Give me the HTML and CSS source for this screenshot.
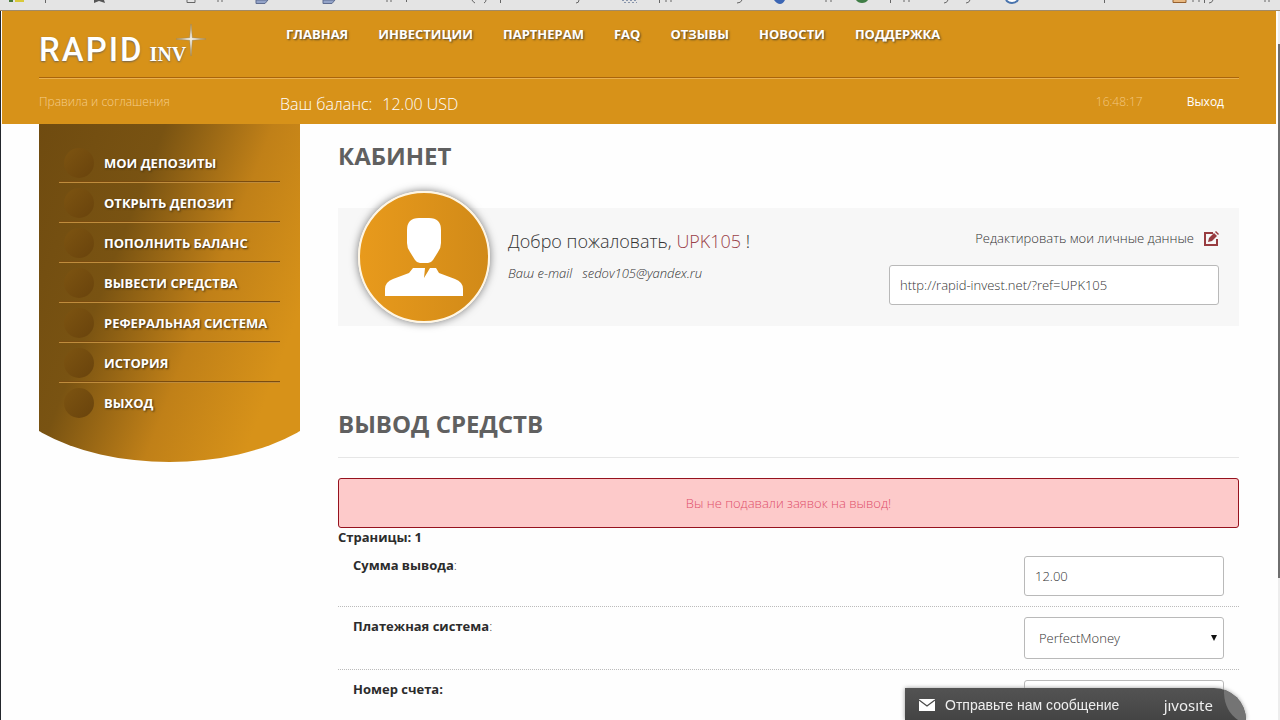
FILE: index.html
```html
<!DOCTYPE html>
<html lang="ru">
<head>
<meta charset="utf-8">
<title>Rapid Inv — Кабинет</title>
<link rel="stylesheet" href="styles.css">
</head>
<body>
<div class="bookmarks" aria-hidden="true">
  <svg class="bookmarks-art" width="1280" height="9" viewBox="0 0 1280 9">
    <path fill="#4a7a3a" d="M9 0h4v2H9z"/><path fill="#d9c93a" d="M15 0h9v2h-9z"/>
    <path fill="#555" d="M94 0h10l1 3-6-2-5 2z"/>
    <path fill="none" stroke="#666" d="M187 0v2.500h8V0"/>
    <path fill="#93a3c8" stroke="#5f6d90" d="M256 0v3.500h9l3-3.500zM323 0v3.500h9l3-3.500z"/>
    <path fill="none" stroke="#666" d="M45.500 0v3M218 0v2M222 0v2M387 0v2M391 0v2M406.500 0v2M472 0q1 2 3 3M486 0q0 2-2 3M500.500 0v3M576 3q3 0 3-3M659.500 0v3M666 0v2M671 0v2M737 3q4 0 5-3M826 0v2M831 0v2M890.500 0v3M904 0v2M909 0v2M944 3q3 0 4-3M966 3q3 0 4-3M1104.500 0v3M1193 0v2M1199 0v2M1204.500 0v3M1209 3q3 0 4-3M1265 0v2M1269 0v2"/>
    <path fill="none" stroke="#8794ac" stroke-dasharray="2 2" d="M622 .5h16M624 2.500h13"/>
    <path fill="#3c66b4" d="M774 0h11q-2 4-5 4t-6-4z"/>
    <path fill="#3f7d45" d="M856 0h12q-2 3-6 3t-6-3z"/>
    <path fill="#fff" stroke="#4873ad" stroke-width="2" d="M1006 0q2 3 6 3t6-3"/>
    <path fill="#e8b880" stroke="#96602f" d="M1173 0v2.500h13V0"/>
  </svg>
</div>
<div class="page">
  <header class="header">
    <div class="header-main">
      <a class="logo" href="#">
        <span class="logo-big">RAPID</span><span class="logo-small">INV</span>
        <svg class="logo-star" width="30" height="32" viewBox="0 0 30 32" aria-hidden="true">
          <path fill="#f4ecdc" stroke="#8f8672" stroke-width=".5" d="M15 0l1.300 13.700L30 15l-13.700 1.300L15 32l-1.300-15.700L0 15l13.700-1.300z"/>
        </svg>
      </a>
      <nav class="nav">
        <a href="#">ГЛАВНАЯ</a>
        <a href="#">ИНВЕСТИЦИИ</a>
        <a href="#">ПАРТНЕРАМ</a>
        <a href="#">FAQ</a>
        <a href="#">ОТЗЫВЫ</a>
        <a href="#">НОВОСТИ</a>
        <a href="#">ПОДДЕРЖКА</a>
      </nav>
    </div>
    <div class="header-sub">
      <a class="rules" href="#">Правила и соглашения</a>
      <div class="balance"><span>Ваш баланс:</span><span>12.00 USD</span></div>
      <time class="clock">16:48:17</time>
      <a class="exit" href="#">Выход</a>
    </div>
  </header>
  <div class="content">
    <nav class="side">
      <ul class="side-list">
        <li><a href="#">МОИ ДЕПОЗИТЫ</a></li>
        <li><a href="#">ОТКРЫТЬ ДЕПОЗИТ</a></li>
        <li><a href="#">ПОПОЛНИТЬ БАЛАНС</a></li>
        <li><a href="#">ВЫВЕСТИ СРЕДСТВА</a></li>
        <li><a href="#">РЕФЕРАЛЬНАЯ СИСТЕМА</a></li>
        <li><a href="#">ИСТОРИЯ</a></li>
        <li><a href="#">ВЫХОД</a></li>
      </ul>
    </nav>
    <main class="main">
      <h1 class="title">КАБИНЕТ</h1>
      <section class="profile">
        <div class="avatar">
          <svg width="80" height="80" viewBox="0 0 80 80" aria-hidden="true">
            <path fill="#fff" d="M23 13Q23 1 35 1h10q12 0 12 12v13q0 5-3 9l-5 8q-2 3-5 3h-8q-3 0-5-3l-5-8q-3-4-3-9z"/>
            <path fill="#fff" d="M29 51h12l-1 10 6-10h6l3 5 16 6q8 3 8 10v7H1v-7q0-7 8-10l16-6z"/>
          </svg>
        </div>
        <div class="hello">
          <p class="hello-name">Добро пожаловать, <span class="user">UPK105</span> !</p>
          <p class="hello-mail"><span>Ваш e-mail</span><span>sedov105@yandex.ru</span></p>
        </div>
        <div class="links">
          <a class="edit" href="#">Редактировать мои личные данные
            <svg width="15" height="15" viewBox="0 0 15 15" aria-hidden="true">
              <path fill="none" stroke="#983c40" stroke-width="2" d="M9 2H1v12h12V8"/>
              <path fill="#983c40" d="M4 11l1-4 5-5 3 3-5 5z"/>
              <path fill="#983c40" d="M11 1l1-1 3 3-1 1z"/>
            </svg>
          </a>
          <input class="field" type="text" aria-label="Реферальная ссылка" value="http://rapid-invest.net/?ref=UPK105">
        </div>
      </section>
      <h2 class="title title-ruled">ВЫВОД СРЕДСТВ</h2>
      <p class="alert">Вы не подавали заявок на вывод!</p>
      <p class="pages">Страницы: 1</p>
      <form class="form">
        <div class="row">
          <label for="sum"><b>Сумма вывода</b>:</label>
          <input class="field" id="sum" type="text" value="12.00">
        </div>
        <div class="row">
          <label for="system"><b>Платежная система</b>:</label>
          <div class="select">
            <select class="field" id="system"><option>PerfectMoney</option></select>
          </div>
        </div>
        <div class="row">
          <label for="account"><b>Номер счета:</b></label>
          <input class="field" id="account" type="text">
        </div>
      </form>
    </main>
  </div>
</div>
<div class="scroll" aria-hidden="true"><div class="scroll-thumb"></div></div>
<button class="chat" type="button">
  <svg width="16" height="12" viewBox="0 0 16 12" aria-hidden="true">
    <path fill="#fff" d="M0 0h16v12H0z"/><path fill="none" stroke="#4a4a4a" stroke-width="1.300" d="M0 1l8 6 8-6"/>
  </svg>
  <span class="chat-text">Отправьте нам сообщение</span>
  <span class="chat-brand">jıvosıte</span>
  <svg class="chat-leaf" width="22" height="32" viewBox="0 0 22 32" aria-hidden="true">
    <path fill="#747474" d="M0 0Q19 3 22 23v9H14Q-1 22 0 0z"/>
  </svg>
</button>
</body>
</html>
```
FILE: styles.css
```css
* { box-sizing: border-box; }

body {
  margin: 0;
  height: 100vh;
  overflow: hidden;
  background: #fefefe;
  color: #333;
  font: 300 13px/20px "Open Sans", "Noto Sans", sans-serif;
}

a { color: inherit; text-decoration: none; }
p, h1, h2, ul { margin: 0; padding: 0; }

.bookmarks {
  height: 11px;
  overflow: hidden;
  background: #e4e4e4;
  border-bottom: 1px solid #a08a68;
}
.bookmarks-art { display: block; }

.page {
  min-height: 100vh;
  margin-right: 4px;
  border-left: 1px solid #23272c;
  padding-left: 1px;
}

.header {
  height: 113px;
  padding: 0 37px;
  background: #d79219;
  color: #fff;
}
.header-main {
  display: flex;
  height: 67px;
  border-bottom: 1px solid #a9650c;
  box-shadow: 0 1px 0 #e9b04f;
}
.logo {
  position: relative;
  display: flex;
  align-items: baseline;
  gap: 6px;
  width: 247px;
  padding-top: 19px;
  text-shadow: 0 1px 2px #6d6250;
}
.logo-big { font: 500 33px/40px Roboto, sans-serif; letter-spacing: 2px; }
.logo-small { font: 700 20px/40px "Liberation Serif", serif; }
.logo-star { position: absolute; left: 137px; top: 13px; }

.nav {
  display: flex;
  gap: 30px;
  padding-top: 13px;
  font-weight: 700;
  text-shadow: 1px 1px 2px #4f4429;
}

.header-sub {
  display: flex;
  align-items: center;
  height: 46px;
  padding: 2px 15px 0 0;
}
.rules { width: 241px; font-size: 12px; color: #f5cd8c; }
.balance { display: flex; gap: 10px; flex: 1; font-size: 16px; padding-top: 4px; }
.clock { font-size: 12px; color: #f2c680; }
.exit { margin-left: 44px; font-size: 12px; font-weight: 400; }

.content {
  display: flex;
  align-items: flex-start;
  gap: 38px;
  padding: 0 37px;
}

.side {
  position: relative;
  z-index: 0;
  flex: none;
  width: 261px;
  height: 338px;
  padding: 19px 20px 0;
  overflow: hidden;
  color: #fff;
}
.side::before {
  content: "";
  position: absolute;
  z-index: -1;
  inset: 0 -50px;
  border-radius: 0 0 50% 50% / 0 0 100px 100px;
  background: linear-gradient(111deg, #6f4b10 10%, #795312 36%, #c08018 58%, #d79219 78%);
}
.side-list { list-style: none; }
.side-list li {
  height: 40px;
  border-bottom: 1px solid #bf8c3c;
  box-shadow: inset 0 -1px 0 #7a4c10;
}
.side-list li:last-child { border: 0; box-shadow: none; }
.side-list a {
  display: flex;
  align-items: center;
  gap: 10px;
  height: 40px;
  padding-left: 5px;
  font-weight: 700;
  white-space: nowrap;
  text-shadow: 1px 1px 2px #3e2f14;
}
.side-list a::before {
  content: "";
  width: 30px;
  height: 30px;
  border-radius: 50%;
  background: linear-gradient(135deg, #7d5411, #69430c);
}

.main { flex: 1; min-width: 0; }
.title {
  padding-top: 16px;
  color: #606060;
  font-size: 24px;
  line-height: 32px;
  font-weight: 700;
}

.profile {
  display: flex;
  height: 118px;
  margin-top: 36px;
  padding: 0 20px;
  background: #f7f7f7;
}
.avatar {
  display: flex;
  justify-content: center;
  align-items: center;
  flex: none;
  width: 132px;
  height: 132px;
  margin-top: -17px;
  border: 2px solid #fff6e4;
  border-radius: 50%;
  background: linear-gradient(90deg, #e89a1c, #d18a18);
  box-shadow: 0 0 8px #777;
}
.hello { flex: 1; padding: 21px 0 0 18px; }
.hello-name { font-size: 18px; line-height: 24px; }
.user { color: #9a4048; }
.hello-mail { display: flex; gap: 10px; margin-top: 10px; font-style: italic; }
.links {
  display: flex;
  flex-direction: column;
  gap: 17px;
  width: 330px;
  padding-top: 20px;
}
.edit { display: flex; justify-content: flex-end; align-items: center; gap: 10px; }

.field {
  width: 100%;
  height: 40px;
  padding: 0 10px;
  border: 1px solid #b9b9b9;
  border-radius: 3px;
  background: #fff;
  color: #333;
  font: inherit;
}

.title-ruled {
  margin-top: 66px;
  padding-bottom: 17px;
  border-bottom: 1px solid #e6e6e6;
}
.alert {
  margin-top: 20px;
  padding: 14px;
  border: 1px solid #96121e;
  border-radius: 3px;
  background: #fdcaca;
  color: #e0506a;
  text-align: center;
}
.pages { font-weight: 700; line-height: 18px; color: #2c2c2c; }
.row {
  display: flex;
  justify-content: space-between;
  align-items: flex-start;
  padding: 10px 15px;
  border-bottom: 1px dotted #bbb;
}
.row label { line-height: 18px; }
.row b { font-weight: 700; color: #2c2c2c; }
.row .field { width: 200px; }
.select { position: relative; }
.select .field { display: block; height: 42px; padding-left: 14px; appearance: none; }
.select::after {
  content: "";
  position: absolute;
  right: 7px;
  top: 18px;
  border: 3px solid transparent;
  border-top: 6px solid #111;
  border-bottom: 0;
}

.scroll {
  position: fixed;
  top: 11px;
  right: 0;
  bottom: 0;
  width: 2px;
  padding-top: 33px;
  background: #ededed;
}
.scroll-thumb { height: 534px; background: #6e6e6e; }

.chat {
  position: fixed;
  right: 34px;
  bottom: 0;
  display: flex;
  align-items: center;
  width: 341px;
  height: 32px;
  padding: 2px 0 0 14px;
  overflow: hidden;
  border: 0;
  border-radius: 0 32px 0 0;
  background: linear-gradient(#535353, #444);
  box-shadow: 0 0 4px #999;
  color: #eee;
  font: 14px/20px "Liberation Sans", Arial, sans-serif;
}
.chat-text { margin-left: 10px; }
.chat-brand { margin-left: auto; padding-right: 33px; font: 15px/20px "Noto Sans", sans-serif; }
.chat-leaf { position: absolute; right: 0; top: 0; }
```
